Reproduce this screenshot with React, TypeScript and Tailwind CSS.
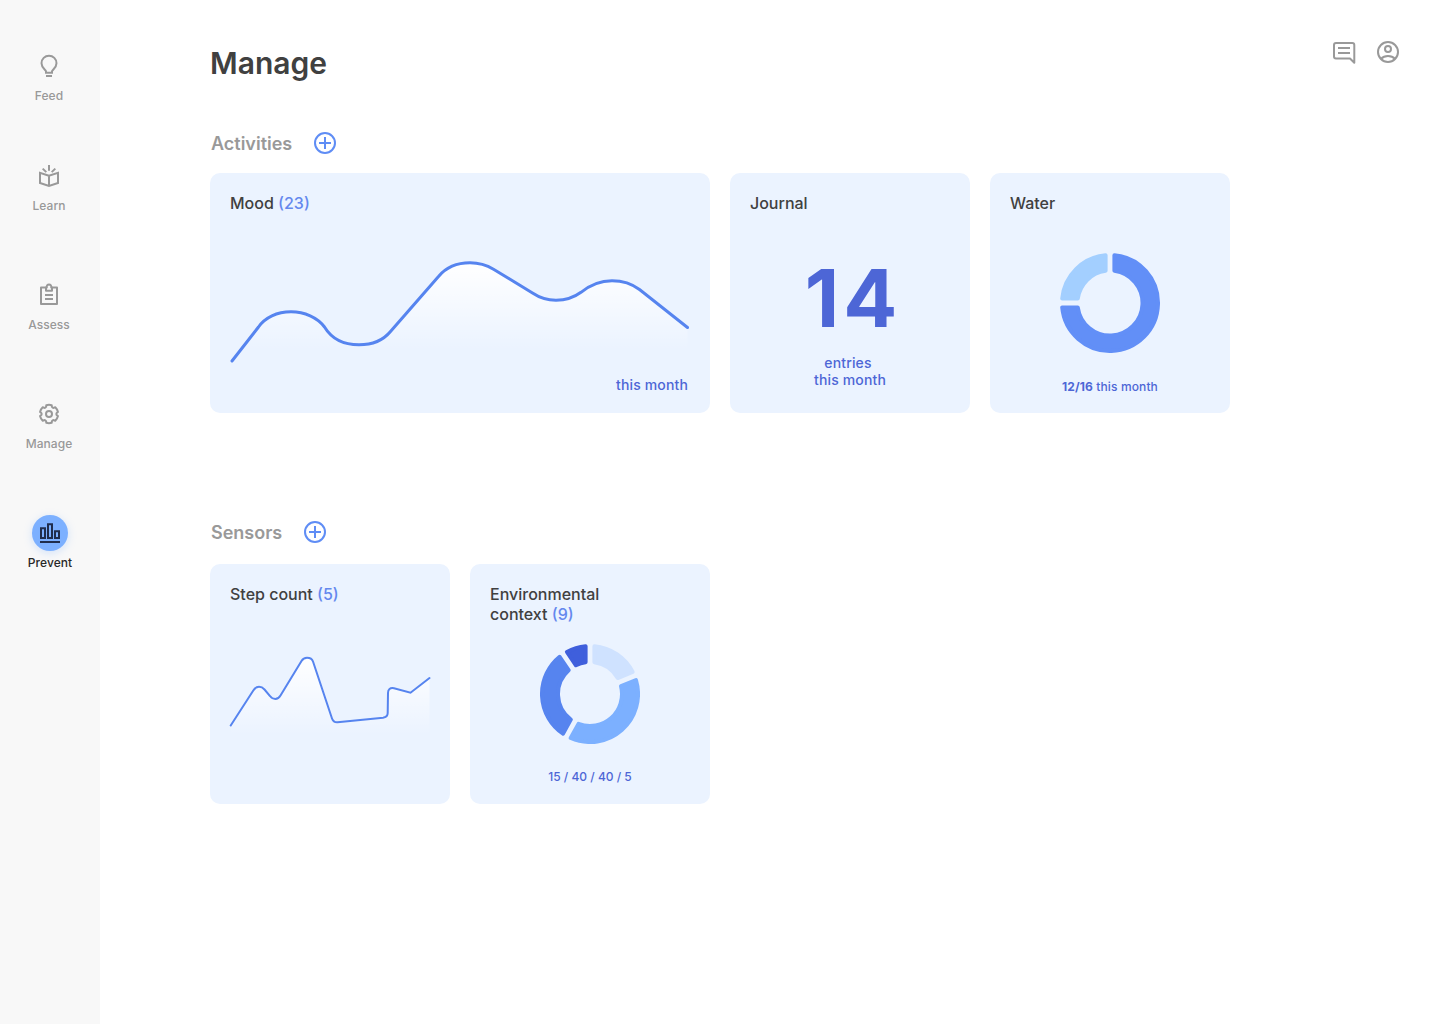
import type { ReactNode } from "react";

const svgBase = {
  width: 24,
  height: 24,
  viewBox: "0 0 24 24",
  fill: "none",
  stroke: "currentColor",
  strokeWidth: 2,
};

function BulbIcon() {
  return (
    <svg {...svgBase}>
      <path d="M9 18.800V17.4C9 16.2 4.5 14 4.5 9.2a7.5 7.5 0 0 1 15 0C19.5 14 15 16.2 15 17.4V18.800Z" />
      <path d="M9 22h6" />
    </svg>
  );
}

function BookIcon() {
  return (
    <svg {...svgBase}>
      <path d="M12 11.7 3 8.8V19l9 3 9-3V8.8Z M12 11.7V22 M12 1v5.7 M5.7 4.6l3.6 3.5 M18.3 4.6l-3.6 3.5" />
    </svg>
  );
}

function ClipboardIcon() {
  return (
    <svg {...svgBase} strokeLinejoin="round" className="overflow-visible">
      <path d="M9 4.500H4V21H20V4.500H15" />
      <path d="M9 4.500V7.700h6V4.500H14.200a2.300 2.300 0 1 0-4.400 0Z" />
      <path d="M8 12h8M8 16h8" />
    </svg>
  );
}

function polar(r: number, deg: number) {
  const a = (deg * Math.PI) / 180;
  return `${(12 + r * Math.sin(a)).toFixed(2)} ${(12 - r * Math.cos(a)).toFixed(2)}`;
}

const gearOutline = [0, 60, 120, 180, 240, 300]
  .map((d, i) => `${i ? "L" : "M"}${polar(9.2, d - 17)}A9.2 9.2 0 0 1 ${polar(9.2, d + 17)}L${polar(7.7, d + 22)}Q${polar(7, d + 30)} ${polar(7.7, d + 38)}`)
  .join("");

function GearIcon() {
  return (
    <svg {...svgBase} strokeLinejoin="round">
      <path d={`${gearOutline}Z`} />
      <circle cx="12" cy="12" r="3" />
    </svg>
  );
}

function BarsIcon() {
  return (
    <svg {...svgBase}>
      <path d="M3 7.3h4v9.700H3ZM10 3.2h4v13.800h-4ZM17 10.3h4v6.700h-4ZM2 21h20" />
    </svg>
  );
}

function CommentIcon() {
  return (
    <svg {...svgBase} strokeLinejoin="round">
      <path d="M22.300 22.800l-4.300-4.300H4A2 2 0 0 1 2 16.500V5A2 2 0 0 1 4 3H20.300A2 2 0 0 1 22.300 5Z" />
      <path d="M6 8h12M6 13h12" />
    </svg>
  );
}

function UserIcon() {
  return (
    <svg {...svgBase}>
      <circle cx="12" cy="12" r="10" />
      <circle cx="12" cy="9" r="3" />
      <path d="M5 18.800C8.500 15 15.500 15 19 18.800" />
    </svg>
  );
}

function AddButton() {
  return (
    <button aria-label="Add" className="text-[#5f8df5]">
      <svg {...svgBase}>
        <circle cx="12" cy="12" r="10" />
        <path d="M12 6v12M6 12h12" />
      </svg>
    </button>
  );
}

function NavItem({ icon, label, active }: { icon: ReactNode; label: string; active?: boolean }) {
  return (
    <a className={active ? "flex flex-col items-center text-[#282828]" : "flex flex-col items-center pr-0.5 text-[#999999]"}>
      {active ? (
        <span className="flex size-9 items-center justify-center rounded-full bg-[#7cb0ff] text-[#1f2d4d] shadow-[0_2px_8px_rgba(124,176,255,0.3)]">{icon}</span>
      ) : (
        <span className="flex size-9 items-center justify-center">{icon}</span>
      )}
      <span className="mt-1 text-xs leading-[15px] font-medium tracking-[0.05px]">{label}</span>
    </a>
  );
}

function point(r: number, deg: number) {
  const a = (deg * Math.PI) / 180;
  return `${(50 + r * Math.sin(a)).toFixed(2)} ${(50 - r * Math.cos(a)).toFixed(2)}`;
}

type Slice = { from: number; to: number; color: string };

// Slices are separated by a constant-width gap, so the angular inset depends on the radius.
function Donut({ slices, inner }: { slices: Slice[]; inner: number }) {
  const round = 2;
  const outerR = 50 - round;
  const innerR = inner + round;
  const inset = 2.4 + round;
  const outerInset = (Math.asin(inset / outerR) * 180) / Math.PI;
  const innerInset = (Math.asin(inset / innerR) * 180) / Math.PI;
  return (
    <svg width="100" height="100" viewBox="0 0 100 100">
      {slices.map(({ from, to, color }) => (
        <path
          key={from}
          fill={color}
          stroke={color}
          strokeWidth={round * 2}
          strokeLinejoin="round"
          d={`M${point(outerR, from + outerInset)}A${outerR} ${outerR} 0 ${to - from > 190 ? 1 : 0} 1 ${point(outerR, to - outerInset)}L${point(innerR, to - innerInset)}A${innerR} ${innerR} 0 ${to - from > 190 ? 1 : 0} 0 ${point(innerR, from + innerInset)}Z`}
        />
      ))}
    </svg>
  );
}

const moodLine =
  "M232 361L258.500 327C265 317.500 277 311.800 291 311.800C304.500 311.800 317.500 317.500 324.500 327C331.500 338.500 344 344.800 359 344.800C371.500 344.800 383 340.500 390.500 331.500L438.500 276.500C446 267.500 457 262.800 470 262.800C478.500 262.800 486.500 265 493.500 269.200L532.500 293C539.500 297.700 547.500 300.200 556 300.200C565 300.200 574 297.500 581 292.300C590 285 600.500 280.700 612 280.700C622.500 280.700 632 283.800 639.500 289.500L687.500 327.500";

const stepLine =
  "M230.700 725.500L253.300 690.500C255 688 256.500 686.800 259 686.800C261.500 686.800 263 687.800 264.500 689.500L270 696C271.500 698 273 698.900 275.300 698.900C277.500 698.900 279 698 280.500 695.500L301.500 661C303 658.500 304.500 657.700 307 657.700C310 657.700 312 658.500 313 661.500L332 718.500C333 721.300 334.500 722.500 337.500 722.300L383 717.700C386 717.300 387.700 716 387.700 713L388 693C388 689.500 390 687.500 394 688.300L410.500 692.700L429.500 678";

function MoodChart() {
  return (
    <svg width="460" height="120" viewBox="230 250 460 120" fill="none">
      <defs>
        <linearGradient id="mood" gradientUnits="userSpaceOnUse" x1="0" y1="263" x2="0" y2="350">
          <stop stopColor="#fff" />
          <stop offset="1" stopColor="#fff" stopOpacity="0" />
        </linearGradient>
      </defs>
      <path d={`${moodLine}V361Z`} fill="url(#mood)" />
      <path d={moodLine} stroke="#5684ef" strokeWidth="3" strokeLinecap="round" />
    </svg>
  );
}

function StepChart() {
  return (
    <svg width="200" height="100" viewBox="230 645 200 100" fill="none" className="overflow-visible">
      <defs>
        <linearGradient id="steps" gradientUnits="userSpaceOnUse" x1="0" y1="658" x2="0" y2="735">
          <stop stopColor="#fff" />
          <stop offset="1" stopColor="#fff" stopOpacity="0" />
        </linearGradient>
      </defs>
      <path d={`${stepLine}V740H230.700Z`} fill="url(#steps)" />
      <path d={stepLine} stroke="#5684ef" strokeWidth="2" strokeLinecap="round" />
    </svg>
  );
}

function Card({ title, count, wide, children }: { title: ReactNode; count?: number; wide?: boolean; children: ReactNode }) {
  return (
    <article className={wide ? "flex h-60 w-[500px] flex-col rounded-[10px] bg-[#ebf3ff] p-5" : "flex h-60 w-60 flex-col rounded-[10px] bg-[#ebf3ff] p-5"}>
      <h3 className="text-base leading-5 font-medium text-[#404040]">
        {title}
        {count !== undefined && <span className="text-[#6488ee]"> ({count})</span>}
      </h3>
      {children}
    </article>
  );
}

export default function App() {
  return (
    <div className="flex h-[1024px] w-[1440px] overflow-hidden bg-white font-['Inter',sans-serif] [font-optical-sizing:none]">
      <nav className="flex w-[100px] shrink-0 flex-col bg-[#f8f8f8] pt-12">
        <NavItem icon={<BulbIcon />} label="Feed" />
        <div className="mt-[55px]"><NavItem icon={<BookIcon />} label="Learn" /></div>
        <div className="mt-16"><NavItem icon={<ClipboardIcon />} label="Assess" /></div>
        <div className="mt-16"><NavItem icon={<GearIcon />} label="Manage" /></div>
        <div className="mt-16"><NavItem icon={<BarsIcon />} label="Prevent" active /></div>
      </nav>

      <main className="flex-1 pl-[110px]">
        <header className="flex h-[131px] justify-between pr-10 pt-10">
          <h1 className="h-12 text-[30px] leading-[47px] font-semibold text-[#404040]">Manage</h1>
          <div className="flex h-6 gap-5 text-[#999999]">
            <CommentIcon />
            <UserIcon />
          </div>
        </header>

        <section>
          <div className="flex h-[42px] gap-[21px] pl-px">
            <h2 className="text-lg leading-[26px] font-semibold text-[#999999]">Activities</h2>
            <div className="h-6"><AddButton /></div>
          </div>
          <div className="flex gap-5">
            <Card title="Mood" count={23} wide>
              <div className="mt-[37px]"><MoodChart /></div>
              <p className="mt-1.5 pr-0.5 text-right text-sm leading-[17px] font-medium tracking-[0.14px] text-[#4d66d6]">this month</p>
            </Card>
            <Card title="Journal">
              <div className="mt-9 text-center text-[#4d66d6]">
                <p className="pl-1.5 text-[80px] leading-[97px] font-bold tracking-[4px]">14</p>
                <p className="mt-2 pr-1 text-sm leading-[17px] font-medium tracking-[0.14px]">entries</p>
                <p className="text-sm leading-[17px] font-medium tracking-[0.14px]">this month</p>
              </div>
            </Card>
            <Card title="Water">
              <div className="mt-10 flex flex-col items-center">
                <Donut inner={30.5} slices={[{ from: 0, to: 270, color: "#628ff7" }, { from: 270, to: 360, color: "#a3cfff" }]} />
                <p className="mt-[26px] text-xs leading-[15px] font-medium tracking-[0.12px] text-[#4d66d6]"><b className="font-bold">12/16</b> this month</p>
              </div>
            </Card>
          </div>
        </section>

        <section className="mt-[107px]">
          <div className="flex h-11 gap-[21px] pl-px">
            <h2 className="text-lg leading-[26px] font-semibold text-[#999999]">Sensors</h2>
            <div className="h-6"><AddButton /></div>
          </div>
          <div className="flex gap-5">
            <Card title="Step count" count={5}>
              <div className="mt-[41px]"><StepChart /></div>
            </Card>
            <Card title={<>Environmental<br />context</>} count={9}>
              <div className="mt-5 flex flex-col items-center">
                <Donut
                  inner={30}
                  slices={[
                    { from: 0, to: 68, color: "#cfe2ff" },
                    { from: 68, to: 209, color: "#7cb0ff" },
                    { from: 209, to: 326, color: "#5684ef" },
                    { from: 326, to: 360, color: "#3f5fdc" },
                  ]}
                />
                <p className="mt-[25px] text-xs leading-[15px] font-medium text-[#4d66d6]">15 / 40 / 40 / 5</p>
              </div>
            </Card>
          </div>
        </section>
      </main>
    </div>
  );
}
